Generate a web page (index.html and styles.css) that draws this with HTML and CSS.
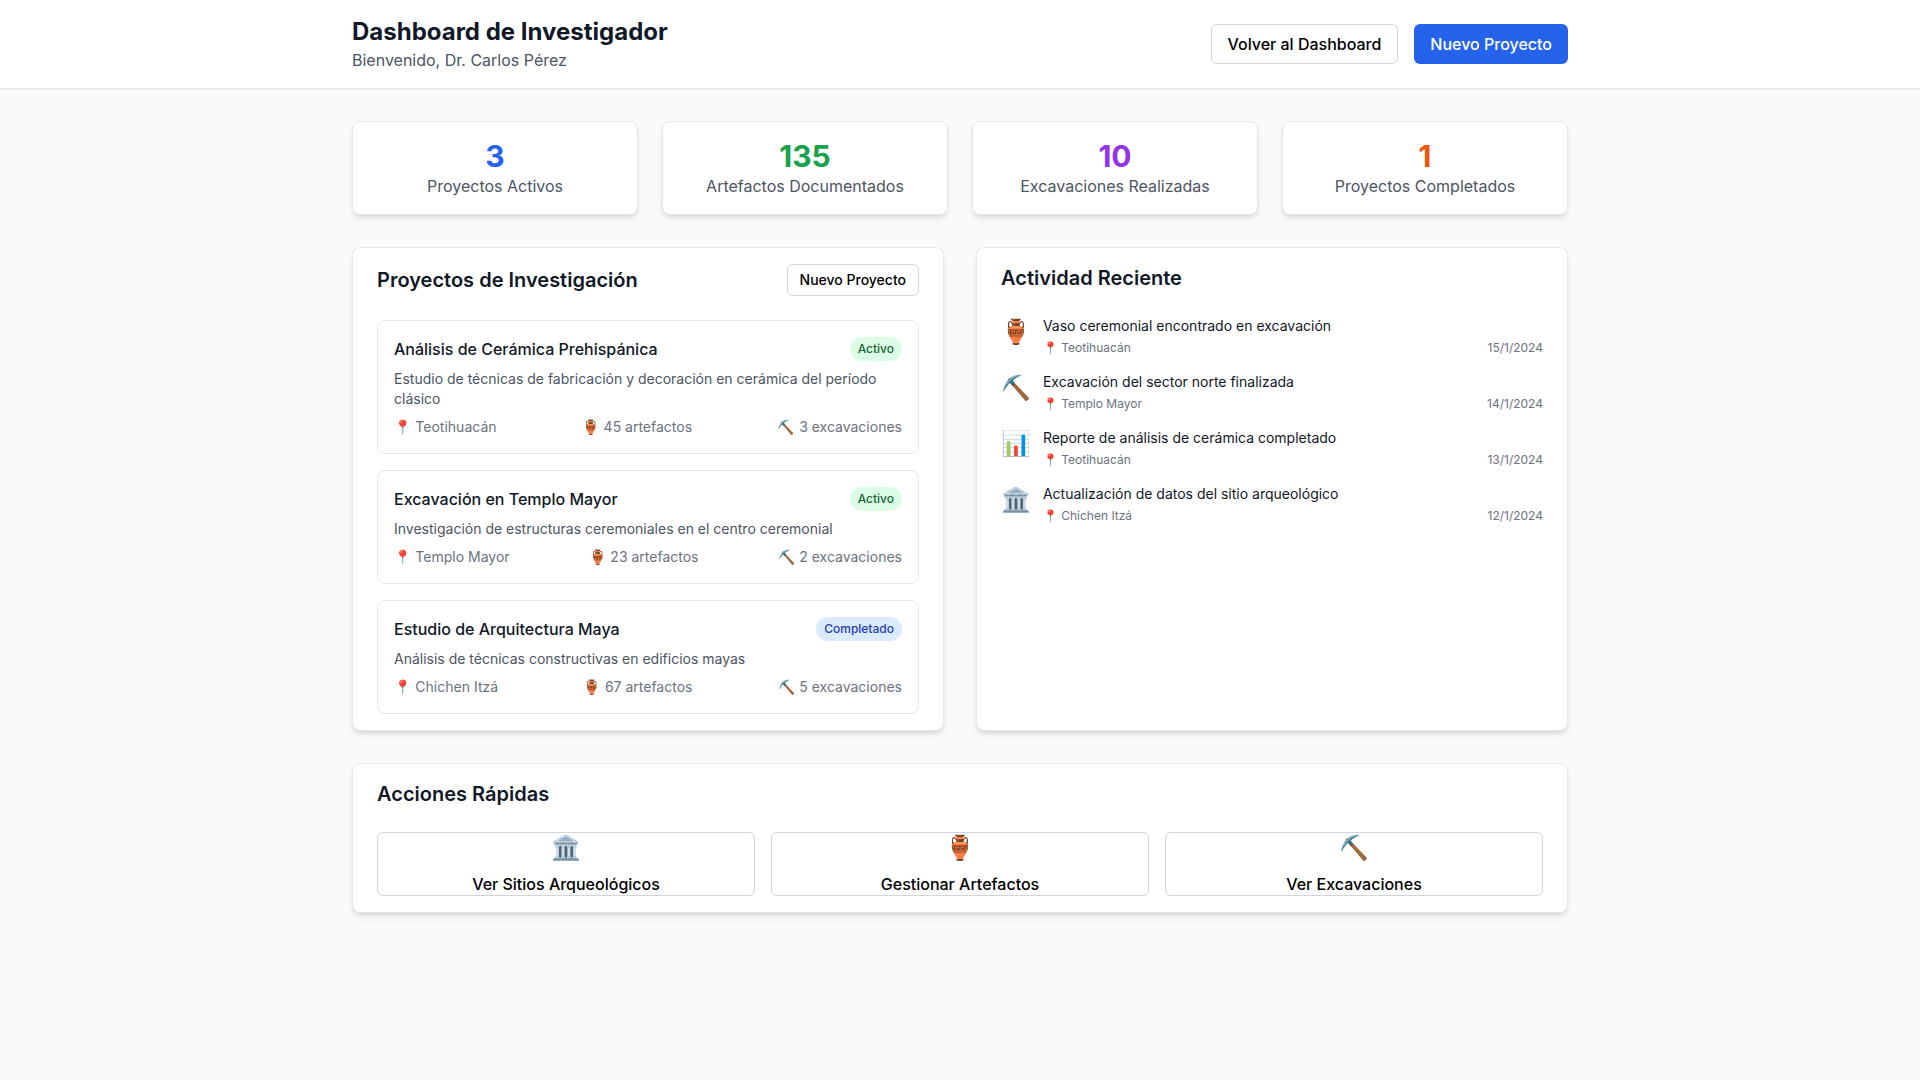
FILE: index.html
```html
<!DOCTYPE html>
<html lang="es">
<head>
  <meta charset="UTF-8" />
  <title>Dashboard de Investigador</title>
  <link rel="stylesheet" href="styles.css">
</head>
<body>
  <header class="topbar">
    <div class="wrap topbar-inner">
      <div>
        <h1>Dashboard de Investigador</h1>
        <p class="welcome">Bienvenido, Dr. Carlos Pérez</p>
      </div>
      <div class="topbar-actions">
        <button class="btn btn-outline">Volver al Dashboard</button>
        <button class="btn btn-primary">Nuevo Proyecto</button>
      </div>
    </div>
  </header>

  <main class="wrap content">
    <section class="stats">
      <div class="card stat"><div class="stat-num blue">3</div><div class="stat-label">Proyectos Activos</div></div>
      <div class="card stat"><div class="stat-num green">135</div><div class="stat-label">Artefactos Documentados</div></div>
      <div class="card stat"><div class="stat-num purple">10</div><div class="stat-label">Excavaciones Realizadas</div></div>
      <div class="card stat"><div class="stat-num orange">1</div><div class="stat-label">Proyectos Completados</div></div>
    </section>

    <section class="columns">
      <div class="card panel">
        <div class="panel-head">
          <h2>Proyectos de Investigación</h2>
          <button class="btn btn-outline btn-small">Nuevo Proyecto</button>
        </div>
        <div class="projects">
          <article class="project">
            <div class="project-head">
              <h3>Análisis de Cerámica Prehispánica</h3>
              <span class="badge badge-green">Activo</span>
            </div>
            <p class="project-desc">Estudio de técnicas de fabricación y decoración en cerámica del período clásico</p>
            <div class="project-meta">
              <span>📍 Teotihuacán</span>
              <span>🏺 45 artefactos</span>
              <span>⛏️ 3 excavaciones</span>
            </div>
          </article>
          <article class="project">
            <div class="project-head">
              <h3>Excavación en Templo Mayor</h3>
              <span class="badge badge-green">Activo</span>
            </div>
            <p class="project-desc">Investigación de estructuras ceremoniales en el centro ceremonial</p>
            <div class="project-meta">
              <span>📍 Templo Mayor</span>
              <span>🏺 23 artefactos</span>
              <span>⛏️ 2 excavaciones</span>
            </div>
          </article>
          <article class="project">
            <div class="project-head">
              <h3>Estudio de Arquitectura Maya</h3>
              <span class="badge badge-blue">Completado</span>
            </div>
            <p class="project-desc">Análisis de técnicas constructivas en edificios mayas</p>
            <div class="project-meta">
              <span>📍 Chichen Itzá</span>
              <span>🏺 67 artefactos</span>
              <span>⛏️ 5 excavaciones</span>
            </div>
          </article>
        </div>
      </div>

      <div class="card panel">
        <h2 class="activity-title">Actividad Reciente</h2>
        <div class="activity">
          <div class="activity-item">
            <div class="activity-icon">🏺</div>
            <div class="activity-body">
              <p class="activity-text">Vaso ceremonial encontrado en excavación</p>
              <div class="activity-foot"><span>📍 Teotihuacán</span><span>15/1/2024</span></div>
            </div>
          </div>
          <div class="activity-item">
            <div class="activity-icon">⛏️</div>
            <div class="activity-body">
              <p class="activity-text">Excavación del sector norte finalizada</p>
              <div class="activity-foot"><span>📍 Templo Mayor</span><span>14/1/2024</span></div>
            </div>
          </div>
          <div class="activity-item">
            <div class="activity-icon">📊</div>
            <div class="activity-body">
              <p class="activity-text">Reporte de análisis de cerámica completado</p>
              <div class="activity-foot"><span>📍 Teotihuacán</span><span>13/1/2024</span></div>
            </div>
          </div>
          <div class="activity-item">
            <div class="activity-icon">🏛️</div>
            <div class="activity-body">
              <p class="activity-text">Actualización de datos del sitio arqueológico</p>
              <div class="activity-foot"><span>📍 Chichen Itzá</span><span>12/1/2024</span></div>
            </div>
          </div>
        </div>
      </div>
    </section>

    <section class="card panel">
      <h2 class="quick-title">Acciones Rápidas</h2>
      <div class="quick">
        <button class="quick-btn"><span class="quick-icon">🏛️</span>Ver Sitios Arqueológicos</button>
        <button class="quick-btn"><span class="quick-icon">🏺</span>Gestionar Artefactos</button>
        <button class="quick-btn"><span class="quick-icon">⛏️</span>Ver Excavaciones</button>
      </div>
    </section>
  </main>
</body>
</html>
```

FILE: styles.css
```css
* {
  box-sizing: border-box;
  margin: 0;
  padding: 0;
}
body {
  background: #f9fafb;
  font-family: Inter, "Noto Color Emoji", sans-serif;
  color: #111827;
  min-height: 100vh;
}
.wrap {
  width: 1216px;
  margin: 0 auto;
}
.topbar {
  background: #fff;
  height: 89px;
  border-bottom: 1px solid #e5e7eb;
  box-shadow: 0 1px 2px rgba(0, 0, 0, 0.05);
}
.topbar-inner {
  height: 88px;
  display: flex;
  justify-content: space-between;
  align-items: center;
}
h1 {
  font-size: 24px;
  line-height: 32px;
  font-weight: 700;
}
.welcome {
  font-size: 16px;
  line-height: 24px;
  color: #4b5563;
}
.topbar-actions {
  display: flex;
  gap: 16px;
}
.btn {
  font-family: inherit;
  font-size: 16px;
  font-weight: 500;
  height: 40px;
  padding: 0 16px;
  border-radius: 6px;
  border: 1px solid #d1d5db;
  background: #fff;
  color: #000;
}
.btn-primary {
  background: #2563eb;
  border: 0;
  color: #fff;
}
.btn-small {
  font-size: 14px;
  line-height: 20px;
  height: 32px;
  padding: 0 12px;
}
.content {
  padding-top: 32px;
}
.card {
  background: #fff;
  border: 1px solid #e5e7eb;
  border-radius: 8px;
  box-shadow: 0 4px 6px -1px rgba(0, 0, 0, 0.1), 0 2px 4px -2px rgba(0, 0, 0, 0.1);
}
.stats {
  display: grid;
  grid-template-columns: repeat(4, 1fr);
  gap: 24px;
  margin-bottom: 32px;
}
.stat {
  height: 94px;
  padding-top: 16px;
  text-align: center;
}
.stat-num {
  font-size: 30px;
  line-height: 36px;
  font-weight: 700;
}
.stat-label {
  font-size: 16px;
  line-height: 24px;
  color: #4b5563;
}
.blue { color: #2563eb; }
.green { color: #16a34a; }
.purple { color: #9333ea; }
.orange { color: #ea580c; }
.columns {
  display: grid;
  grid-template-columns: repeat(2, 1fr);
  gap: 32px;
  margin-bottom: 32px;
}
.panel {
  padding: 16px 24px;
}
h2 {
  font-size: 20px;
  line-height: 28px;
  font-weight: 600;
}
.panel-head {
  display: flex;
  justify-content: space-between;
  align-items: center;
  margin-bottom: 24px;
}
.projects {
  display: flex;
  flex-direction: column;
  gap: 16px;
}
.project {
  border: 1px solid #e5e7eb;
  border-radius: 8px;
  padding: 16px;
}
.project-head {
  display: flex;
  justify-content: space-between;
  align-items: center;
  margin-bottom: 8px;
}
h3 {
  font-size: 16px;
  line-height: 24px;
  font-weight: 500;
}
.badge {
  font-size: 12px;
  line-height: 16px;
  font-weight: 500;
  padding: 4px 8px;
  border-radius: 12px;
}
.badge-green {
  background: #dcfce7;
  color: #166534;
}
.badge-blue {
  background: #dbeafe;
  color: #1e40af;
}
.project-desc {
  font-size: 14px;
  line-height: 20px;
  color: #4b5563;
  margin-bottom: 8px;
}
.project-meta {
  display: flex;
  justify-content: space-between;
  font-size: 14px;
  line-height: 20px;
  color: #6b7280;
}
.activity-title {
  margin-bottom: 24px;
}
.activity {
  display: flex;
  flex-direction: column;
  gap: 16px;
}
.activity-item {
  display: flex;
  gap: 12px;
}
.activity-icon {
  font-size: 24px;
  line-height: 32px;
}
.activity-body {
  flex: 1;
}
.activity-text {
  font-size: 14px;
  line-height: 20px;
}
.activity-foot {
  display: flex;
  justify-content: space-between;
  margin-top: 4px;
  font-size: 12px;
  line-height: 16px;
  color: #6b7280;
}
.quick-title {
  margin-bottom: 24px;
}
.quick {
  display: grid;
  grid-template-columns: repeat(3, 1fr);
  gap: 16px;
}
.quick-btn {
  font-family: inherit;
  font-size: 16px;
  line-height: 24px;
  font-weight: 500;
  height: 64px;
  display: flex;
  flex-direction: column;
  align-items: center;
  justify-content: center;
  background: #fff;
  border: 1px solid #d1d5db;
  border-radius: 6px;
  color: #000;
}
.quick-icon {
  display: block;
  font-size: 24px;
  line-height: 32px;
  margin-bottom: 8px;
}
```
